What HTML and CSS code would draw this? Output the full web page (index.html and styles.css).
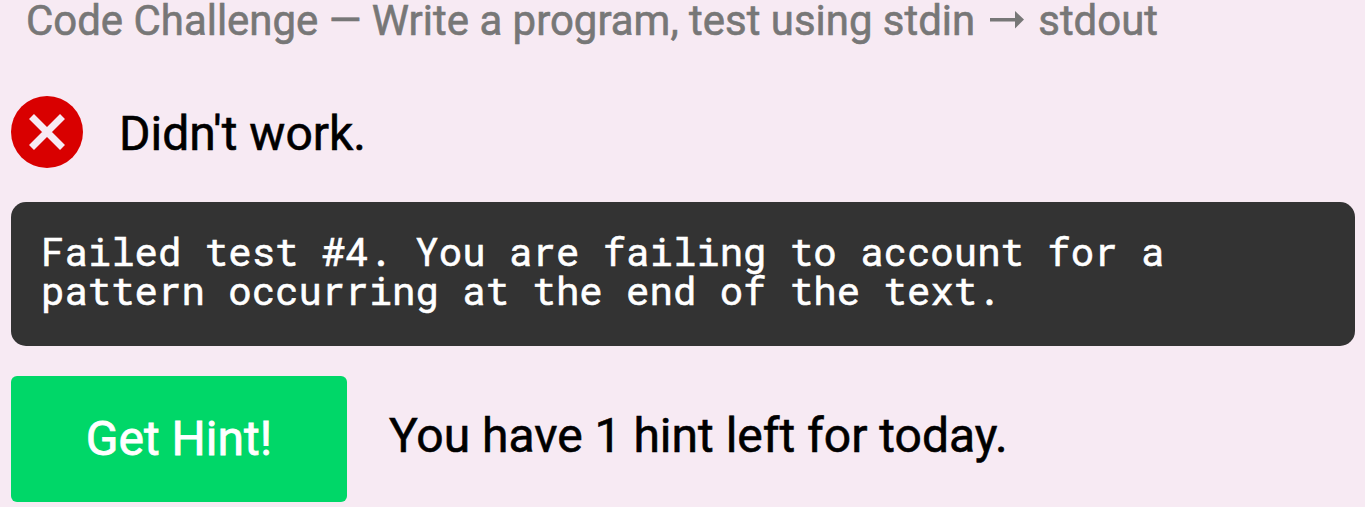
FILE: index.html
```html
<!DOCTYPE html>
<html lang="en">
<head>
<meta charset="utf-8">
<title>Code Challenge</title>
<link rel="stylesheet" href="styles.css">
</head>
<body>
<main class="challenge">
  <p class="subtitle"><span>Code Challenge — Write a program, test using stdin</span><svg class="arrow" viewBox="0 0 34 20"><path d="M0 8H25V1L34 9.500L25 18.500V11.500H0Z"/></svg><span>stdout</span></p>
  <div class="status">
    <svg class="status-icon" viewBox="0 0 72 72"><circle cx="36" cy="36" r="36"/><path d="M20.500 20.500L51.500 51.500M51.500 20.500L20.500 51.500"/></svg>
    <span class="status-text">Didn't work.</span>
  </div>
  <pre class="output">Failed test #4. You are failing to account for a
pattern occurring at the end of the text.</pre>
  <div class="hint">
    <button class="hint-button">Get Hint!</button>
    <span class="hint-text">You have 1 hint left for today.</span>
  </div>
</main>
</body>
</html>
```
FILE: styles.css
```css
* { box-sizing: border-box; }
body { margin: 0; background: #f7eaf3; font-family: Roboto, sans-serif; color: #000; overflow: hidden; -webkit-text-stroke: 0.6px currentColor; }
.challenge { height: 507px; padding: 0 10px 5px 11px; }
.subtitle { display: flex; height: 96px; margin: 0; padding-left: 15px; font-size: 41.95px; line-height: 42px; color: #777; white-space: nowrap; }
.arrow { width: 34px; height: 20px; margin: 10px 14px 0 15px; fill: #777; }
.status { display: flex; height: 106px; }
.status-icon { width: 72px; height: 72px; margin-right: 36px; fill: #d90000; }
.status-icon path { stroke: #f7eaf3; stroke-width: 7; }
.status-text { font-size: 48px; line-height: 76px; }
.output { height: 144px; margin: 0 0 30px; padding: 30px; border-radius: 15px; background: #333; color: #fff; font: 39px/39px "Roboto Mono", "DejaVu Sans Mono", monospace; }
.hint { display: flex; }
.hint-button { width: 336px; height: 126px; margin-right: 42px; padding: 0; border: 0; border-radius: 6px; background: #00d768; color: #fff; font: 400 48px/56px Roboto, sans-serif; -webkit-text-stroke: 0.8px #fff; }
.hint-text { font-size: 48px; line-height: 119px; white-space: nowrap; }
```
